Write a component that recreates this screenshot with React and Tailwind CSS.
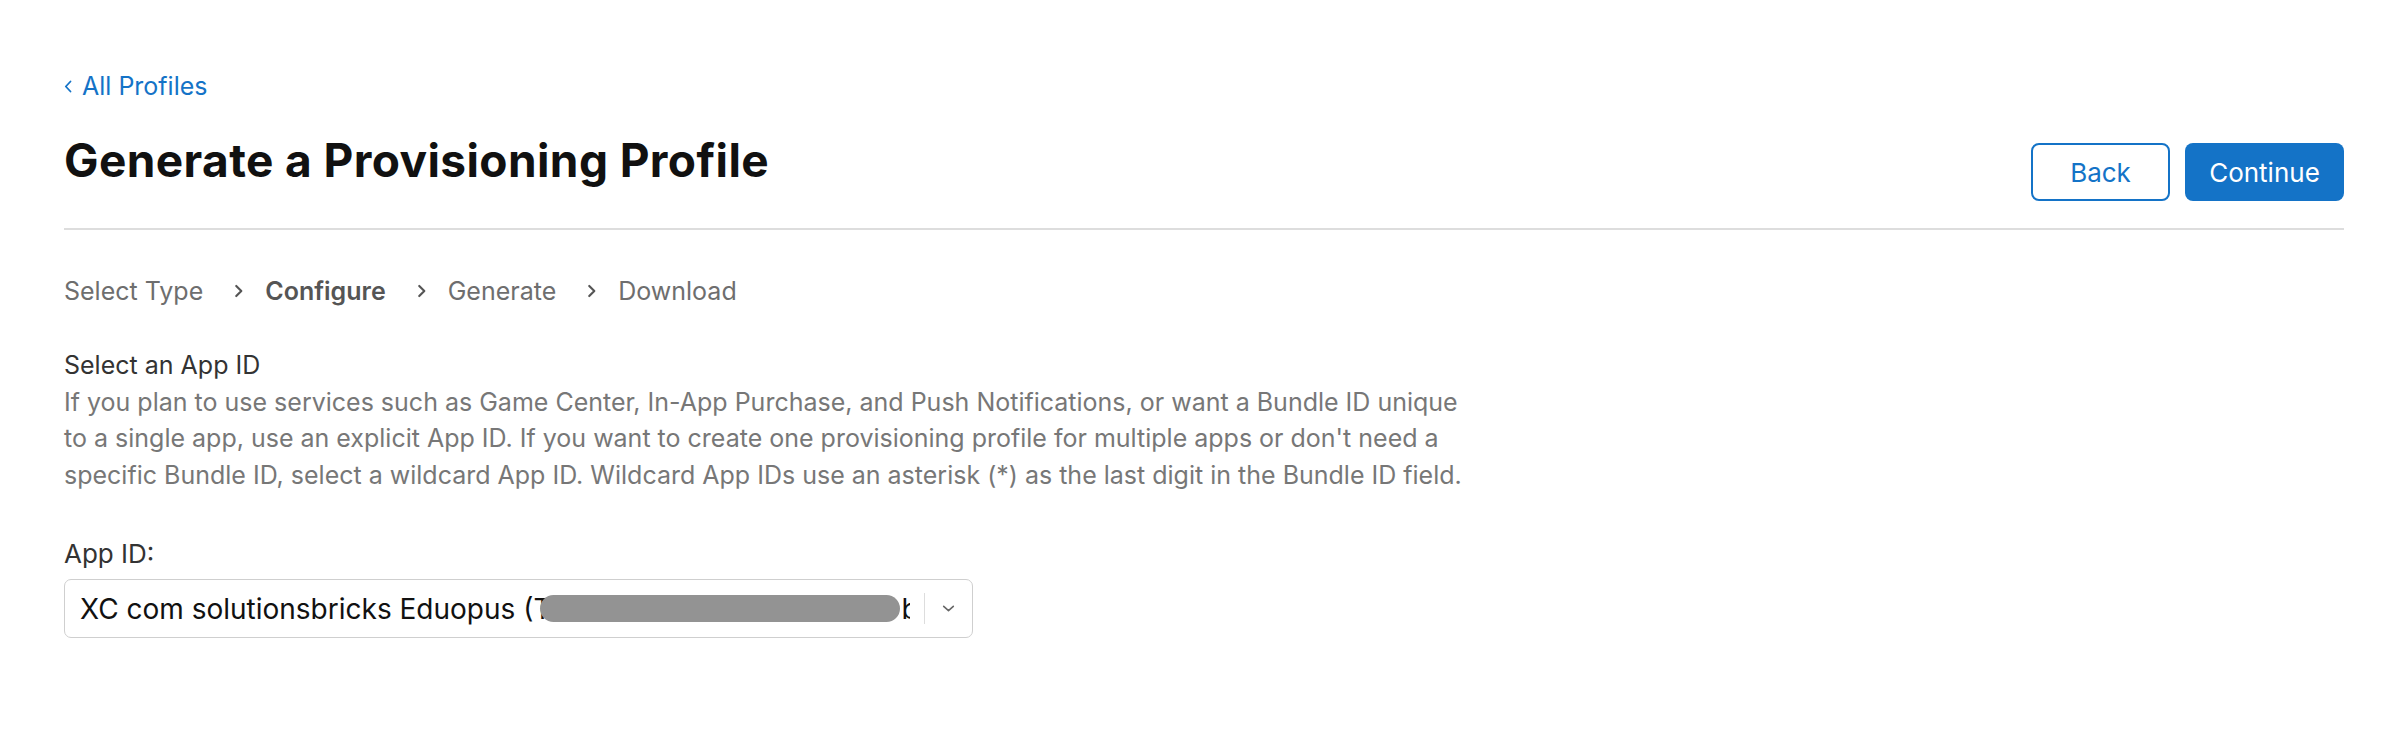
import React from 'react';

const steps = [
  { label: 'Select Type', active: false },
  { label: 'Configure', active: true },
  { label: 'Generate', active: false },
  { label: 'Download', active: false },
];

function Chevron({ className }) {
  return (
    <svg viewBox="0 0 8 12" className={className} fill="none" stroke="currentColor" strokeWidth="1.9" strokeLinecap="round" strokeLinejoin="round">
      <path d="M2 1.5 6.5 6 2 10.5" />
    </svg>
  );
}

export default function App() {
  return (
    <div className="min-h-screen bg-white pl-[64px] pr-[50px] pt-[70px] font-['Inter','Liberation_Sans',sans-serif]">
      {/* back link */}
      <a href="#" className="flex h-[32px] items-center gap-[10px] text-[25px] leading-[32px] text-[#1473c7]">
        <svg viewBox="0 0 8 13" className="h-[13px] w-[8px]" fill="none" stroke="currentColor" strokeWidth="1.8" strokeLinecap="round" strokeLinejoin="round">
          <path d="M6.5 1.5 1.8 6.5l4.7 5" />
        </svg>
        <span>All Profiles</span>
      </a>

      {/* header */}
      <div className="mt-[33px] flex items-start justify-between">
        <h1 className="text-[46px] font-bold leading-[50px] tracking-[0.4px] text-[#111111]">Generate a Provisioning Profile</h1>
        <div className="mt-[8px] flex gap-[15px]">
          <button className="h-[58px] w-[139px] rounded-[8px] border-2 border-[#1473c7] text-[26px] text-[#1473c7]">Back</button>
          <button className="h-[58px] w-[159px] rounded-[8px] bg-[#1473c7] text-[26px] text-white">Continue</button>
        </div>
      </div>

      <div className="mt-[27px] h-[2px] bg-[#dddddd]" />

      {/* steps */}
      <div className="mt-[46px] flex items-center text-[25px] leading-[30px] text-[#6e6e6e]">
        {steps.map((s, i) => (
          <React.Fragment key={s.label}>
            {i > 0 && <Chevron className="ml-[31px] mr-[22px] h-[14px] w-[9px] text-[#555555]" />}
            <span className={s.active ? 'font-semibold text-[#555555]' : ''}>{s.label}</span>
          </React.Fragment>
        ))}
      </div>

      {/* description */}
      <div className="mt-[41px] max-w-[1410px] text-[25px] leading-[36.5px]">
        <h2 className="text-[#333333]">Select an App ID</h2>
        <p className="text-[#777777]">
          If you plan to use services such as Game Center, In-App Purchase, and Push Notifications, or want a Bundle ID unique to a single app, use an explicit App ID. If you want to create one provisioning profile for multiple apps or don't need a specific Bundle ID, select a wildcard App ID. Wildcard App IDs use an asterisk (*) as the last digit in the Bundle ID field.
        </p>
      </div>

      {/* app id select */}
      <label className="mt-[46px] block text-[26px] leading-[30px] text-[#333333]">App ID:</label>
      <div className="mt-[10px] flex h-[59px] w-[909px] items-center rounded-[7px] border border-[#cfcfcf] pl-[15px]">
        <div className="flex w-[830px] items-center overflow-hidden whitespace-nowrap text-[28px] text-[#111111]">
          <span>XC com solutionsbricks Eduopus (T</span>
          <span className="ml-[-12px] inline-block h-[27px] w-[360px] shrink-0 rounded-full bg-[#939393]" />
          <span className="ml-[2px]">b</span>
        </div>
        <div className="ml-auto h-[31px] w-px bg-[#dddddd]" />
        <svg viewBox="0 0 14 8" className="mx-[17px] h-[7px] w-[13px] text-[#666666]" fill="none" stroke="currentColor" strokeWidth="1.8" strokeLinecap="round" strokeLinejoin="round">
          <path d="M1.5 1.5 7 6.5l5.5-5" />
        </svg>
      </div>
    </div>
  );
}
